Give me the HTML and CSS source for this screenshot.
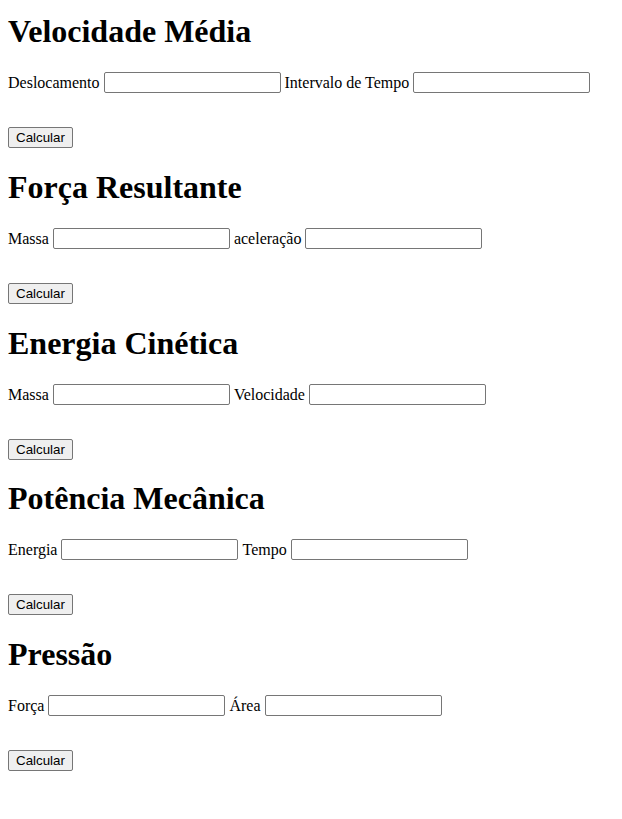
FILE: index.html
```html
<!DOCTYPE html>
<html lang="pt-BR">
<head>
<meta charset="utf-8">
<title>Física</title>
<link rel="stylesheet" href="styles.css">
</head>
<body>
<main class="page">
  <section class="calc">
    <h1 class="title">Velocidade Média</h1>
    <div class="row">
      <label class="lbl">Deslocamento</label><input class="field" type="text">
      <label class="lbl">Intervalo de Tempo</label><input class="field" type="text">
    </div>
    <button class="btn" type="button">Calcular</button>
  </section>
  <section class="calc">
    <h1 class="title">Força Resultante</h1>
    <div class="row">
      <label class="lbl">Massa</label><input class="field" type="text">
      <label class="lbl">aceleração</label><input class="field" type="text">
    </div>
    <button class="btn" type="button">Calcular</button>
  </section>
  <section class="calc">
    <h1 class="title">Energia Cinética</h1>
    <div class="row">
      <label class="lbl">Massa</label><input class="field" type="text">
      <label class="lbl">Velocidade</label><input class="field" type="text">
    </div>
    <button class="btn" type="button">Calcular</button>
  </section>
  <section class="calc">
    <h1 class="title">Potência Mecânica</h1>
    <div class="row">
      <label class="lbl">Energia</label><input class="field" type="text">
      <label class="lbl">Tempo</label><input class="field" type="text">
    </div>
    <button class="btn" type="button">Calcular</button>
  </section>
  <section class="calc">
    <h1 class="title">Pressão</h1>
    <div class="row">
      <label class="lbl">Força</label><input class="field" type="text">
      <label class="lbl">Área</label><input class="field" type="text">
    </div>
    <button class="btn" type="button">Calcular</button>
  </section>
</main>
</body>
</html>
```
FILE: styles.css
```css
html, body {
  margin: 0;
  padding: 0;
  background: #fff;
}
body {
  font-family: "Liberation Serif", "Times New Roman", serif;
  font-size: 16px;
  color: #000;
}
.page {
  padding: 13px 8px 0;
  display: flex;
  flex-direction: column;
  gap: 20.8px;
}
.calc {
  display: flex;
  flex-direction: column;
  align-items: flex-start;
}
.title {
  margin: 0 0 22px;
  font-family: "Liberation Serif", "Times New Roman", serif;
  font-size: 32px;
  font-weight: bold;
  line-height: 37px;
  height: 37px;
}
.row {
  display: flex;
  align-items: flex-start;
  gap: 4px;
  height: 21px;
}
.lbl {
  font-size: 16px;
  line-height: 21px;
}
.field {
  box-sizing: border-box;
  width: 177px;
  height: 21px;
  margin: 0;
  padding: 1px 2px;
  border: 1px solid #767676;
  border-radius: 2px;
  background: #fff;
  font-family: "Liberation Sans", Arial, sans-serif;
  font-size: 13.333px;
  line-height: 15px;
}
.btn {
  box-sizing: border-box;
  margin: 34px 0 0;
  width: 65px;
  height: 21px;
  padding: 1px 6px;
  border: 1px solid #767676;
  border-radius: 2px;
  background: #efefef;
  color: #000;
  font-family: "Liberation Sans", Arial, sans-serif;
  font-size: 13.333px;
  line-height: 15px;
}
```
